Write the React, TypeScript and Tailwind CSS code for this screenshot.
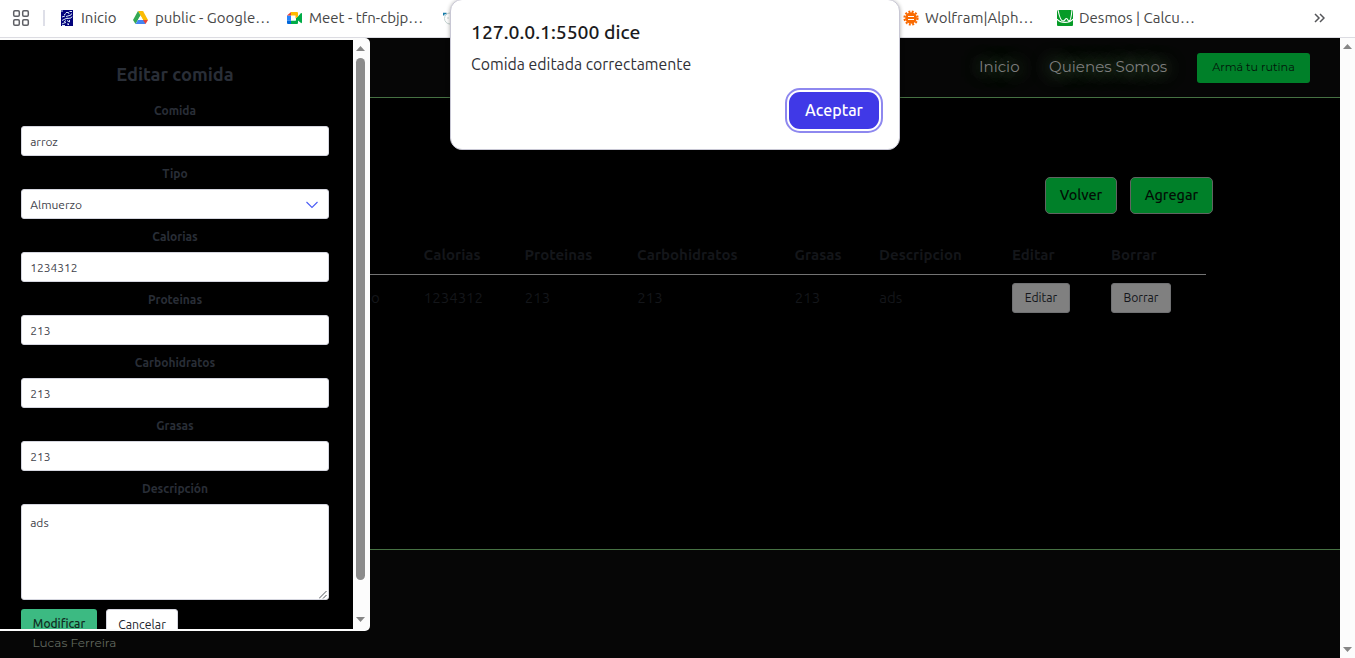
import React from "react";

const ubuntu = "font-['Ubuntu','Noto_Sans','Open_Sans',sans-serif]";
const montserrat = "font-['Montserrat','Inter',sans-serif]";

function Triangle({ down = false }: { down?: boolean }) {
  return (
    <svg width="9" height="5" viewBox="0 0 9 5" className="block">
      <path d={down ? "M0 0H9L4.5 5Z" : "M0 5H9L4.5 0Z"} fill="#868686" />
    </svg>
  );
}

function Bookmarks() {
  return (
    <div className={`${ubuntu} flex h-[38px] shrink-0 items-center border-b border-[#dcdce2] bg-white pb-px text-[15px] whitespace-nowrap text-[#474747]`}>
      <svg width="18" height="18" viewBox="0 0 18 18" className="ml-3 shrink-0" fill="none" stroke="#5f6066" strokeWidth="1.5">
        <rect x="1.7" y="1.7" width="5.6" height="5.6" rx="1.2" />
        <rect x="10.7" y="1.7" width="5.6" height="5.6" rx="1.2" />
        <rect x="1.7" y="10.7" width="5.6" height="5.6" rx="1.2" />
        <rect x="10.7" y="10.7" width="5.6" height="5.6" rx="1.2" />
      </svg>
      <div className="ml-[13px] h-4 w-[2px] bg-[#dedfe8]" />
      <svg width="12" height="16" viewBox="0 0 12 16" className="ml-4 shrink-0">
        <path fill="#03037c" d="M0 0H12V16H0Z" />
        <path d="M0 1H2M8.500 1.500H11M5 2.500H7.500L8 4M3 5L5 3.500M5 6.500L10 5L10.500 3.500M1 7L4 6M6 8.500L10 8L11 6.500M1 10.500L4 9L6.500 8M3 12L5 10.500M6 10.500L8.500 12V10M1 14L3 13L5 12.500M6 14H8L7 15M1 15.500H4" stroke="#d9eaf5" fill="none" strokeWidth="1" />
      </svg>
      <span className="ml-2 w-[52px]">Inicio</span>
      <svg width="15" height="14" viewBox="0 0 15 14" className="shrink-0">
        <path fill="#fbbc04" d="M5 0H9.500Q10 0 10.300.5L15 9H10Z" />
        <path fill="#34a853" d="M5 0L7.500 4.500L2.500 13L0 9Z" />
        <path fill="#4285f4" d="M5 9H12L12.500 13H2.500Z" />
        <path fill="#ea4335" d="M10 9H15L12.500 13Z" />
        <path fill="#fff" d="M7.500 4.500L10 9H5Z" />
      </svg>
      <span className="ml-[7px] w-[132px]">public - Google…</span>
      <svg width="16" height="14" viewBox="0 0 16 14" className="shrink-0">
        <path fill="#00ac47" d="M4 9.500H9V7L11 5.500L14 2Q15 1.500 15 3V11Q15 12.500 14 12L11 9.500V12Q11 13 10 13H4Z" />
        <path fill="#fff" d="M4 4.500H8.500V9.500H4Z" />
        <path fill="#ffba00" d="M4 1H10Q11 1 11 2V5.500L8.500 7.500V4.500H4Z" />
        <path fill="#2684fc" d="M0 4.500H4V9.500H0Z" />
        <path fill="#0066da" d="M0 9.500H4V13H1Q0 13 0 12Z" />
        <path fill="#ea4335" d="M0 4.500L4 1V4.500Z" />
      </svg>
      <span className="ml-[6px] w-[134px]">Meet - tfn-cbjp…</span>
      <svg width="12" height="14" viewBox="0 0 12 14" className="shrink-0" fill="none">
        <circle cx="7" cy="7.500" r="5.500" stroke="#c4d3d0" />
        <path d="M.7 4.500V2.500H3.500" stroke="#187ba8" strokeWidth="1.500" />
        <path d="M4.500 7H5.500" stroke="#8fa8a2" />
      </svg>
      <svg width="16" height="16" viewBox="-8 -8 16 16" className="ml-[448px] shrink-0">
        <circle r="5.800" fill="#f96a00" />
        <circle r="6.500" fill="none" stroke="#f96a00" strokeWidth="2.200" strokeDasharray="1.900 1.503" />
        <path d="M-3 -1.500H3M-3 1.500H3" stroke="#fff" strokeWidth="1.200" />
      </svg>
      <span className="ml-[6px] w-[132px]">Wolfram|Alph…</span>
      <svg width="16" height="16" viewBox="0 0 16 16" className="shrink-0">
        <rect width="16" height="16" rx="1" fill="#069b27" />
        <path d="M1 0C2 5 4 11 6 11S8 8.500 9.500 8.500S10.500 11 12 11S14.500 5 15 0M0 9C3 13.500 13 13.500 16 9" stroke="#fff" strokeWidth="1.100" fill="none" />
      </svg>
      <span className="ml-[6px] w-[235px]">Desmos | Calcu…</span>
      <svg width="11" height="10" viewBox="0 0 11 10" fill="none" stroke="#55565a" strokeWidth="1.500" className="shrink-0">
        <path d="M1 1L5 5L1 9M6 1L10 5L6 9" />
      </svg>
    </div>
  );
}

function Header() {
  return (
    <header className={`${montserrat} flex h-[60px] shrink-0 items-center justify-end border-b border-[#467143] bg-[#060606] pr-[30px]`}>
      <a className="mr-[30px] w-[40px] text-[15.050px] whitespace-nowrap text-[#7d7d7d] [text-shadow:0_0_20px_#8aa583,0_0_20px_#4c8044]">Inicio</a>
      <a className="mr-[30px] w-[118px] text-[15.100px] whitespace-nowrap text-[#7d7d7d] [text-shadow:0_0_20px_#8aa583,0_0_20px_#4c8044]">Quienes Somos</a>
      <button className="h-[30px] w-[113px] rounded-[3px] bg-[#008029] pb-px text-[11.2px] whitespace-nowrap text-[#03150a]">Armá tu rutina</button>
    </header>
  );
}

const columns = [
  { name: "Calorias", value: "1234312", size: "w-[101px]" },
  { name: "Proteinas", value: "213", size: "w-[112.5px]" },
  { name: "Carbohidratos", value: "213", size: "w-[157.5px]" },
  { name: "Grasas", value: "213", size: "w-[84.500px]" },
  { name: "Descripcion", value: "ads", size: "w-[133px]" },
];

function Foods() {
  return (
    <main className={`${ubuntu} flex h-[451px] shrink-0 flex-col bg-black pt-[79px] text-[#14161a]`}>
      <div className="flex justify-end gap-[13px] pr-[127px] text-[14.4px] font-medium text-[#020e05]">
        <button className="h-[37px] w-[72px] rounded-[5px] border border-[#616461] bg-[#008029]">Volver</button>
        <button className="h-[37px] w-[83px] rounded-[5px] border border-[#616461] bg-[#008029]">Agregar</button>
      </div>
      <div className="mr-[134px] flex h-[61px] items-center border-b border-[#737373] pt-[23px] pl-[423.6px] text-[15px] font-bold">
        {columns.map((c) => <span key={c.name} className={`${c.size} shrink-0`}>{c.name}</span>)}
        <span className="w-[99px] shrink-0">Editar</span>
        <span>Borrar</span>
      </div>
      <div className="flex h-[46px] items-center text-[15px]">
        <span className="w-[423.800px] pl-[371px]">o</span>
        {columns.map((c) => <span key={c.name} className={`${c.size} shrink-0`}>{c.value}</span>)}
        <button className="mr-[41px] -ml-[.3px] h-[30px] w-[58px] rounded-[3px] border border-[#707173] bg-[#808080] text-[12.2px] text-[#14161b]">Editar</button>
        <button className="h-[30px] w-[60px] rounded-[3px] border border-[#707173] bg-[#808080] text-[12.2px] text-[#14161b]">Borrar</button>
      </div>
    </main>
  );
}

function Field({ label, value, select = false }: { label: string; value: string; select?: boolean }) {
  return (
    <div className="h-[63px]">
      <div className="flex h-[33px] items-center justify-center pt-[2px] text-xs font-bold text-[#292e37]">{label}</div>
      <div className="flex h-[30px] items-center justify-between rounded-[3px] border border-[#d5d6df] bg-white pt-[2px] pr-[10px] pl-[8.200px] text-xs text-[#3f434b]">
        {value}
        {select && (
          <svg width="12" height="8" viewBox="0 0 12 8" fill="none" stroke="#4a5cf5" strokeWidth="1.100" className="block">
            <path d="M.5 1L6 6.500L11.500 1" />
          </svg>
        )}
      </div>
    </div>
  );
}

function EditPanel() {
  return (
    <aside className={`${ubuntu} absolute top-[38px] left-0 flex h-[593px] w-[370px] overflow-hidden rounded-r-[5px] bg-[#fcfcfc] py-[2px]`}>
      <form className="flex w-[353px] flex-col overflow-hidden bg-black px-[21px] pr-[24px]">
        <h2 className="flex h-[53px] shrink-0 items-end justify-center pt-[22px] pb-[6px] text-[18.3px] leading-[25px] font-bold text-[#292e37]">Editar comida</h2>
        <Field label="Comida" value="arroz" />
        <Field label="Tipo" value="Almuerzo" select />
        <Field label="Calorias" value="1234312" />
        <Field label="Proteinas" value="213" />
        <Field label="Carbohidratos" value="213" />
        <Field label="Grasas" value="213" />
        <div className="flex h-[33px] shrink-0 items-center justify-center pt-[2px] text-xs font-bold text-[#292e37]">Descripción</div>
        <div className="flex h-24 shrink-0 items-start justify-between rounded-[3px] border border-[#d5d6df] bg-white pt-[10px] pr-px pl-[8.200px] text-xs text-[#3f434b]">
          ads
          <svg width="8" height="8" viewBox="0 0 8 8" className="self-end" fill="none" stroke="#51545c">
            <path d="M0 7.500L7.500 0M4 7.500L7.500 4" />
          </svg>
        </div>
        <div className="mt-[9px] flex shrink-0 gap-[9px] text-xs">
          <button className="h-[30px] w-[76px] rounded-[3px] bg-[#3cba82] font-medium text-[#102b21]">Modificar</button>
          <button className="h-[30px] w-[72px] rounded-[3px] border border-[#d5d6df] bg-white pt-[2px] text-[12.3px] text-[#20242c]">Cancelar</button>
        </div>
      </form>
      <div className="flex w-[15px] flex-col items-center pt-[6px] pb-[7px]">
        <Triangle />
        <div className="mt-[7px] mb-auto h-[522px] w-[9px] rounded-full bg-[#8b8b8b]" />
        <Triangle down />
      </div>
    </aside>
  );
}

function AlertDialog() {
  return (
    <div className={`${ubuntu} absolute -top-px left-[450px] flex h-[151px] w-[450px] flex-col rounded-[12px] border border-[#c8c7d4] bg-white px-5 shadow-[0_1px_4px_#0005]`}>
      <h1 className="mt-5 h-[25px] text-[19.4px] leading-[25px] font-medium whitespace-nowrap text-[#1b1b20]">127.0.0.1:5500 dice</h1>
      <p className="mt-[7px] h-6 text-[15.85px] leading-6 whitespace-nowrap text-[#303036]">Comida editada correctamente</p>
      <button className="mt-4 h-[37px] w-[90px] self-end rounded-[11px] bg-[#4039e7] pb-[2px] text-base font-medium text-white outline-2 outline-offset-2 outline-[#8e88ef]">Aceptar</button>
    </div>
  );
}

export default function App() {
  return (
    <div className="relative flex h-[658px] w-[1355px] flex-col overflow-hidden bg-black">
      <Bookmarks />
      <div className="flex h-[620px]">
        <div className="flex w-[1340px] flex-col">
          <Header />
          <Foods />
          <footer className={`${montserrat} h-[109px] border-t border-[#467143] bg-[#060606] pt-[85px] pl-[32.5px] text-xs text-[#61685e]`}>Lucas Ferreira</footer>
        </div>
        <div className="flex w-[15px] flex-col items-center justify-between bg-[#fcfcfc] pt-[6px] pb-[6px]">
          <Triangle />
          <Triangle down />
        </div>
      </div>
      <EditPanel />
      <AlertDialog />
    </div>
  );
}
